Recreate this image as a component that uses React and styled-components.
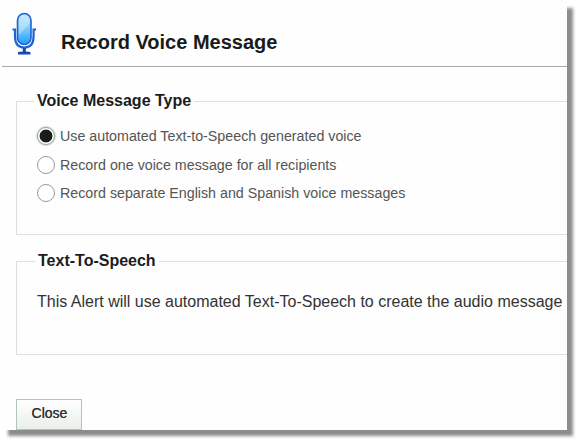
import React from "react";
import styled, { createGlobalStyle } from "styled-components";

const Global = createGlobalStyle`
  html, body { margin: 0; padding: 0; background: #ffffff; overflow: hidden; }
  body { font-family: "Liberation Sans", Arial, sans-serif; }
`;

const Stage = styled.div`
  width: 581px;
  height: 444px;
  padding: 2px 0 0 2px;
  box-sizing: border-box;
`;

const Panel = styled.div`
  width: 565px;
  height: 428px;
  background: #fdfefd;
  box-shadow: 6px 6px 3px #8c8c8c;
  overflow: hidden;
  display: flex;
  flex-direction: column;
  position: relative;
`;

const Header = styled.header`
  height: 64px;
  flex: none;
  border-bottom: 1px solid #a9a9a9;
  display: flex;
  align-items: flex-start;
  padding-left: 9px;
`;

const MicBox = styled.div`
  width: 27px;
  height: 43px;
  margin-top: 10px;
  flex: none;
`;

const Title = styled.h1`
  margin: 28px 0 0 23px;
  font-size: 20px;
  line-height: 24px;
  font-weight: bold;
  color: #1a1a1a;
`;

const Content = styled.div`
  flex: 1;
  display: flex;
  flex-direction: column;
  padding: 25px 0 0 14px;
`;

const Group = styled.fieldset`
  width: 640px;
  height: ${(p) => p.$h}px;
  margin: 0 0 ${(p) => p.$mb}px;
  padding: 0;
  box-sizing: border-box;
  border: 1px solid #dcdfdc;
  min-inline-size: 0;
`;

const Legend = styled.legend`
  margin-left: ${(p) => p.$ml}px;
  padding: 0 3px;
  font-size: 16px;
  line-height: 18px;
  font-weight: bold;
  color: #1c1c1c;
`;

const Options = styled.div`
  display: grid;
  grid-template-rows: 29px 28px 18px;
  padding: 17px 0 0 20px;
`;

const Option = styled.label`
  display: flex;
  align-items: flex-start;
  gap: 5px;
  font-size: 14.25px;
  line-height: 18px;
  color: #555555;
`;

const Radio = styled.input.attrs({ type: "radio" })`
  appearance: none;
  margin: 0;
  width: 18px;
  height: 18px;
  flex: none;
  box-sizing: border-box;
  border-radius: 50%;
  border: 1px solid #9a9a9a;
  background: #ffffff;
  &:checked {
    border: 1px solid #8fa593;
    background: radial-gradient(circle, #1b1b1b 0 6px, #ffffff 6.8px);
    box-shadow: 0 0 2px #7f9a84;
  }
`;

const Body = styled.p`
  margin: 0;
  padding: 23px 0 0 20px;
  font-size: 16px;
  line-height: 18px;
  color: #333333;
  white-space: nowrap;
`;

const CloseButton = styled.button`
  margin-top: 44px;
  width: 66px;
  height: 31px;
  flex: none;
  padding: 0 0 4px 1px;
  border: 1px solid #b3c6b5;
  background: linear-gradient(#ffffff, #e9efe9);
  font-family: inherit;
  font-size: 14px;
  color: #333333;
  text-shadow: 0 0 0.4px #333333;
`;

const Mic = () => (
  <svg width="27" height="43" viewBox="0 0 27 43" aria-hidden="true">
    <defs>
      <linearGradient id="cap" x1="0" y1="0" x2="0" y2="1">
        <stop offset="0" stopColor="#b4e2fc" />
        <stop offset="0.45" stopColor="#86cffb" />
        <stop offset="1" stopColor="#1e9bfa" />
      </linearGradient>
    </defs>
    <rect x="6.5" y="1.5" width="13.5" height="31" rx="6.75" fill="url(#cap)" stroke="#1f63d6" strokeWidth="1.6" />
    <path d="M8 23 L18.8 11 V8 Q17 3 13.3 3 Q9 3 8 8 Z" fill="#ffffff" opacity="0.3" />
    <path d="M1.5 17.5 H4 V24 C4 32 8 35.5 13.3 35.5 C18.6 35.5 22.6 32 22.6 24 V17.5 H25" fill="none" stroke="#1f63d6" strokeWidth="2.2" />
    <path d="M11.8 36 H14.8 V39.5 L19.5 40 V42.5 H7 V40 L11.8 39.5 Z" fill="#1747b5" />
  </svg>
);

export default function App() {
  return (
    <Stage>
      <Global />
      <Panel>
        <Header>
          <MicBox><Mic /></MicBox>
          <Title>Record Voice Message</Title>
        </Header>
        <Content>
          <Group $h={143} $mb={17}>
            <Legend $ml={17}>Voice Message Type</Legend>
            <Options>
              <Option><Radio name="t" defaultChecked />Use automated Text-to-Speech generated voice</Option>
              <Option><Radio name="t" />Record one voice message for all recipients</Option>
              <Option><Radio name="t" />Record separate English and Spanish voice messages</Option>
            </Options>
          </Group>
          <Group $h={103} $mb={0}>
            <Legend $ml={18}>Text-To-Speech</Legend>
            <Body>This Alert will use automated Text-To-Speech to create the audio message</Body>
          </Group>
          <CloseButton>Close</CloseButton>
        </Content>
      </Panel>
    </Stage>
  );
}
